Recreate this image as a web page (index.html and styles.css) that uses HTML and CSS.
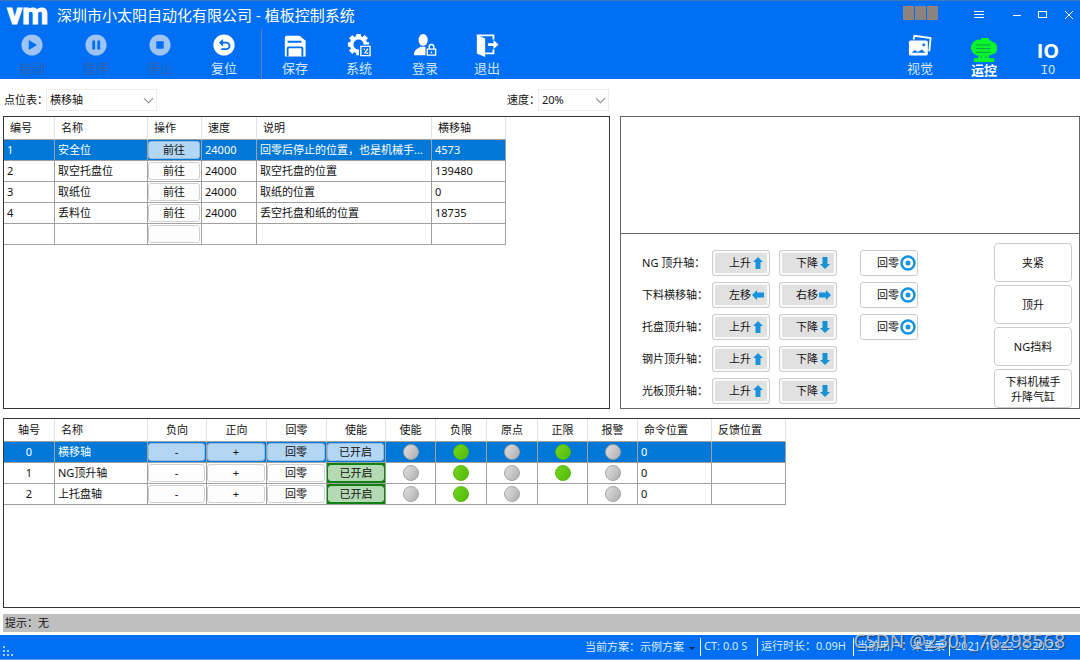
FILE: index.html
```html
<!DOCTYPE html>
<html lang="zh-CN">
<head>
    <meta charset="UTF-8">
    <meta name="viewport" content="width=device-width, initial-scale=1.0">
    <title>植板控制系统</title>
    <link rel="stylesheet" href="styles.css">
</head>
<body>
    <header class="header">
        <div class="title-bar">
            <span class="logo">vm</span>
            <h1>深圳市小太阳自动化有限公司 - 植板控制系统</h1>
            <div class="blocks"><i></i><i></i><i></i></div>
            <div class="window-buttons">
                <button class="menu" aria-label="菜单"><svg width="12" height="12" viewBox="0 0 12 12"><path d="M1 2.5h10M1 5.5h10M1 8.5h10"/></svg></button>
                <button aria-label="最小化"><svg width="12" height="12" viewBox="0 0 12 12"><path d="M2 6.5h8"/></svg></button>
                <button aria-label="最大化"><svg width="12" height="12" viewBox="0 0 12 12"><rect x="1.5" y="2.5" width="8" height="6"/></svg></button>
                <button aria-label="关闭"><svg width="12" height="12" viewBox="0 0 12 12"><path d="M2 2l8 8M10 2l-8 8"/></svg></button>
            </div>
        </div>
        <nav class="toolbar">
            <button class="tool" disabled>
                <svg viewBox="0 0 26 26"><circle cx="13" cy="13" r="11.5"/><path class="cut" d="M9.5 7.5l9 5.5-9 5.5z"/></svg>
                <span>启动</span>
            </button>
            <button class="tool" disabled>
                <svg viewBox="0 0 26 26"><circle cx="13" cy="13" r="11.5"/><path class="cut" d="M9 8h3v10H9zM14.5 8h3v10h-3z"/></svg>
                <span>暂停</span>
            </button>
            <button class="tool" disabled>
                <svg viewBox="0 0 26 26"><circle cx="13" cy="13" r="11.5"/><path class="cut" d="M9 9h8v8H9z"/></svg>
                <span>停止</span>
            </button>
            <button class="tool">
                <svg viewBox="0 0 26 26"><circle cx="13" cy="13" r="11.5"/><path class="cut-line" d="M9.5 10.5h6a3.5 3.5 0 0 1 0 7H10"/><path class="cut" d="M7.5 10.5l4.5-4v8z"/></svg>
                <span>复位</span>
            </button>
            <div class="separator"></div>
            <button class="tool">
                <svg viewBox="0 0 26 26"><path d="M2 5a2 2 0 0 1 2-2h14l6.5 5.5v17H2z"/><path class="cut-line" d="M5 9.5h15M5 25.5v-9a1 1 0 0 1 1-1h14a1 1 0 0 1 1 1v9"/></svg>
                <span>保存</span>
            </button>
            <button class="tool">
                <svg viewBox="0 0 26 26"><circle class="line gear" cx="12.5" cy="12.5" r="7.5"/><path class="line teeth" d="M12.5 5V1M12.5 20v4M5 12.5H1M20 12.5h4M7 7L4 4M18 7l3-3M7 18l-3 3"/><path class="cut" d="M13 12.5h13V26H13z"/><path class="line thin" d="M15 14.5h10v10H15zM18 17.5h1.5M22.5 17L19 22M21 22h2"/></svg>
                <span>系统</span>
            </button>
            <button class="tool login">
                <svg viewBox="0 0 26 26"><ellipse cx="11" cy="7.5" rx="5" ry="6.5"/><path d="M1 24c0-5 3-7 7.5-9H15v9z"/><path class="cut" d="M13.5 13H26v13H13.5z"/><path class="line thin" d="M15.5 17.5h9V24h-9zM17.5 17.5V15a2.5 2.5 0 0 1 5 0v2.5M20 20v2"/></svg>
                <span>登录</span>
            </button>
            <button class="tool exit">
                <svg viewBox="0 0 26 26"><path d="M2 2l9 4v20l-7-3a2 2 0 0 1-2-2z"/><path class="line" d="M2 2.5h18V7M20 18v4h-9"/><path d="M14 11h6V7.5l5.5 5-5.5 5V14h-6z"/></svg>
                <span>退出</span>
            </button>
            <div class="spacer"></div>
            <button class="tool">
                <svg viewBox="0 0 26 26"><path class="line" d="M6 7l1-4 17.5 2.5L23 20"/><rect x="1" y="8" width="20.5" height="16.5" rx="2"/><path class="cut" d="M4 21.5l3.5-3 3 2 4.5-2.500 4 3.5z"/><circle class="cut" cx="17" cy="13" r="1.5"/></svg>
                <span>视觉</span>
            </button>
            <button class="tool active">
                <svg viewBox="0 0 28 28"><path d="M11 3V1h8v2h1l4 3h2l2 4v4l-2 4h-2l-4 2h-1v3h6v4H3v-4h5v-3H6l-4-3-2-4v-3l2-4 4-3z"/><path class="cut-line" d="M5 8.5h16M5 12.5h16M5 16.5h16M11 20v3M16 20v3"/></svg>
                <span>运控</span>
            </button>
            <button class="tool">
                <b class="io">IO</b>
                <span class="mono">IO</span>
            </button>
        </nav>
    </header>

    <main class="content">
        <div class="filters">
            <label for="pointTable">点位表：</label>
            <div class="select-box wide">
                <select id="pointTable"><option>横移轴</option></select>
            </div>
            <label class="speed-label" for="speed">速度：</label>
            <div class="select-box">
                <select id="speed"><option>20%</option></select>
            </div>
        </div>

        <div class="upper">
            <section class="panel">
                <table class="points">
                    <colgroup><col class="w51"><col class="w93"><col class="w54"><col class="w55"><col class="w175"><col class="w74"></colgroup>
                    <thead>
                        <tr><th>编号</th><th>名称</th><th>操作</th><th>速度</th><th>说明</th><th>横移轴</th></tr>
                    </thead>
                    <tbody>
                        <tr class="selected"><td>1</td><td>安全位</td><td class="action"><button>前往</button></td><td>24000</td><td>回零后停止的位置，也是机械手...</td><td>4573</td></tr>
                        <tr><td>2</td><td>取空托盘位</td><td class="action"><button>前往</button></td><td>24000</td><td>取空托盘的位置</td><td>139480</td></tr>
                        <tr><td>3</td><td>取纸位</td><td class="action"><button>前往</button></td><td>24000</td><td>取纸的位置</td><td>0</td></tr>
                        <tr><td>4</td><td>丢料位</td><td class="action"><button>前往</button></td><td>24000</td><td>丢空托盘和纸的位置</td><td>18735</td></tr>
                        <tr><td></td><td></td><td class="action"><button aria-label="前往"></button></td><td></td><td></td><td></td></tr>
                    </tbody>
                </table>
            </section>

            <section class="panel side">
                <div class="preview"></div>
                <div class="controls">
                    <div class="axes">
                        <div class="axis">
                            <span>NG 顶升轴：</span>
                            <button class="jog">上升<svg viewBox="0 0 12 12"><path d="M6 0l5 5H8.5v7h-5V5H1z"/></svg></button>
                            <button class="jog">下降<svg viewBox="0 0 12 12"><path d="M6 12l5-5H8.5V0h-5v7H1z"/></svg></button>
                            <button class="home">回零<svg viewBox="0 0 16 16"><circle class="ring" cx="8" cy="8" r="6.5"/><circle cx="8" cy="8" r="2.5"/></svg></button>
                        </div>
                        <div class="axis">
                            <span>下料横移轴：</span>
                            <button class="jog">左移<svg viewBox="0 0 12 12"><path d="M0 6l5-5v2.5h7v5H5V11z"/></svg></button>
                            <button class="jog">右移<svg viewBox="0 0 12 12"><path d="M12 6L7 1v2.5H0v5h7V11z"/></svg></button>
                            <button class="home">回零<svg viewBox="0 0 16 16"><circle class="ring" cx="8" cy="8" r="6.5"/><circle cx="8" cy="8" r="2.5"/></svg></button>
                        </div>
                        <div class="axis">
                            <span>托盘顶升轴：</span>
                            <button class="jog">上升<svg viewBox="0 0 12 12"><path d="M6 0l5 5H8.5v7h-5V5H1z"/></svg></button>
                            <button class="jog">下降<svg viewBox="0 0 12 12"><path d="M6 12l5-5H8.5V0h-5v7H1z"/></svg></button>
                            <button class="home">回零<svg viewBox="0 0 16 16"><circle class="ring" cx="8" cy="8" r="6.5"/><circle cx="8" cy="8" r="2.5"/></svg></button>
                        </div>
                        <div class="axis">
                            <span>钢片顶升轴：</span>
                            <button class="jog">上升<svg viewBox="0 0 12 12"><path d="M6 0l5 5H8.5v7h-5V5H1z"/></svg></button>
                            <button class="jog">下降<svg viewBox="0 0 12 12"><path d="M6 12l5-5H8.5V0h-5v7H1z"/></svg></button>
                        </div>
                        <div class="axis">
                            <span>光板顶升轴：</span>
                            <button class="jog">上升<svg viewBox="0 0 12 12"><path d="M6 0l5 5H8.5v7h-5V5H1z"/></svg></button>
                            <button class="jog">下降<svg viewBox="0 0 12 12"><path d="M6 12l5-5H8.5V0h-5v7H1z"/></svg></button>
                        </div>
                    </div>
                    <div class="cylinders">
                        <button>夹紧</button>
                        <button>顶升</button>
                        <button>NG挡料</button>
                        <button>下料机械手<br>升降气缸</button>
                    </div>
                </div>
            </section>
        </div>

        <section class="panel lower">
            <table class="status">
                <colgroup><col class="w51"><col class="w93"><col class="w59"><col class="w60"><col class="w60"><col class="w59"><col class="w50"><col class="w51"><col class="w51"><col class="w50"><col class="w50"><col class="w74"><col class="w74"></colgroup>
                <thead>
                    <tr><th>轴号</th><th class="left">名称</th><th>负向</th><th>正向</th><th>回零</th><th>使能</th><th>使能</th><th>负限</th><th>原点</th><th>正限</th><th>报警</th><th class="left">命令位置</th><th class="left">反馈位置</th></tr>
                </thead>
                <tbody>
                    <tr class="selected">
                        <td>0</td><td class="left">横移轴</td>
                        <td class="action"><button>-</button></td><td class="action"><button>+</button></td><td class="action"><button>回零</button></td><td class="action"><button>已开启</button></td>
                        <td><i class="lamp"></i></td><td><i class="lamp on"></i></td><td><i class="lamp"></i></td><td><i class="lamp on"></i></td><td><i class="lamp"></i></td>
                        <td class="left">0</td><td></td>
                    </tr>
                    <tr>
                        <td>1</td><td class="left">NG顶升轴</td>
                        <td class="action"><button>-</button></td><td class="action"><button>+</button></td><td class="action"><button>回零</button></td><td class="action enabled"><button>已开启</button></td>
                        <td><i class="lamp"></i></td><td><i class="lamp on"></i></td><td><i class="lamp"></i></td><td><i class="lamp on"></i></td><td><i class="lamp"></i></td>
                        <td class="left">0</td><td></td>
                    </tr>
                    <tr>
                        <td>2</td><td class="left">上托盘轴</td>
                        <td class="action"><button>-</button></td><td class="action"><button>+</button></td><td class="action"><button>回零</button></td><td class="action enabled"><button>已开启</button></td>
                        <td><i class="lamp"></i></td><td><i class="lamp on"></i></td><td><i class="lamp"></i></td><td></td><td><i class="lamp"></i></td>
                        <td class="left">0</td><td></td>
                    </tr>
                </tbody>
            </table>
        </section>

        <div class="message">提示：无</div>
    </main>

    <footer class="footer">
        <svg class="grip" width="10" height="10" viewBox="0 0 10 10"><path d="M0 0h2v2H0zM0 4h2v2H0zM4 4h2v2H4zM0 8h2v2H0zM4 8h2v2H4zM8 8h2v2H8z"/></svg>
        <label for="scheme">当前方案：</label>
        <div class="scheme-box">
            <select id="scheme"><option>示例方案</option></select>
        </div>
        <span class="ct">CT: 0.0 S</span>
        <span class="runtime">运行时长：0.09H</span>
        <span class="user">当前用户：未登录</span>
        <span class="clock">2021/10/22 15:20:23</span>
        <div class="watermark">CSDN @2301_76298568</div>
    </footer>
</body>
</html>
```
FILE: styles.css
```css
* {
    box-sizing: border-box;
}

body {
    margin: 0;
    min-height: 100vh;
    display: flex;
    flex-direction: column;
    background: #fff;
    color: #111;
    font-family: "Noto Sans", "Noto Sans CJK SC", sans-serif;
    font-size: 11px;
    line-height: 16px;
}

button, select {
    font: inherit;
    color: inherit;
    margin: 0;
    padding: 0;
    border: none;
    background: none;
}

/* Header */
.header {
    height: 79px;
    background: #006ff3;
    border-top: 1px solid #3c76bb;
    color: #fff;
}

.title-bar {
    display: flex;
    align-items: center;
    height: 28px;
    padding-left: 7px;
}

.logo {
    width: 50px;
    height: 28px;
    font-family: Roboto, sans-serif;
    font-size: 30px;
    font-weight: 700;
    line-height: 25px;
    -webkit-text-stroke: 1px #fff;
}

h1 {
    margin: 0;
    font-size: 15px;
    font-weight: 400;
    line-height: 24px;
}

.blocks {
    display: flex;
    gap: 1px;
    margin-left: auto;
    margin-bottom: 4px;
}

.blocks i {
    width: 11px;
    height: 14px;
    background: #8c8280;
}

.window-buttons {
    display: flex;
    gap: 14px;
    margin-left: 35px;
    padding-right: 5px;
}

.window-buttons button {
    display: flex;
}

.window-buttons .menu {
    margin-right: 12px;
}

.window-buttons svg {
    fill: none;
    stroke: #fff;
}

.toolbar {
    display: flex;
    height: 50px;
}

.tool {
    display: flex;
    flex-direction: column;
    align-items: center;
    width: 64px;
    padding-top: 4px;
    font-size: 13px;
    color: #d5e7ff;
}

.tool svg {
    width: 26px;
    height: 26px;
    fill: #fff;
}

.tool span {
    line-height: 22px;
}

.tool .cut {
    fill: #006ff3;
}

.tool .cut-line {
    fill: none;
    stroke: #006ff3;
    stroke-width: 2;
}

.tool .line {
    fill: none;
    stroke: #fff;
    stroke-width: 2;
}

.tool .thin {
    stroke-width: 1.5;
}

.tool .gear {
    stroke-width: 4;
}

.tool .teeth {
    stroke-width: 5;
}

.tool:disabled svg {
    fill: #9cc3f3;
}

.tool:disabled span {
    color: #2c62b2;
}

.tool.login {
    width: 68px;
}

.tool.exit {
    width: 56px;
}

.tool.active {
    color: #fff;
    font-weight: 700;
    padding-top: 8px;
}

.tool.active svg {
    width: 28px;
    fill: #0cf52c;
}

.tool.active .cut-line {
    stroke: #089a50;
    stroke-width: 1;
}

.tool.active span {
    line-height: 14px;
}

.tool .io {
    height: 26px;
    font-family: "Open Sans", sans-serif;
    font-size: 20px;
    line-height: 36px;
    color: #fff;
}

.tool .mono {
    font-family: "Liberation Mono", monospace;
    font-size: 12px;
    line-height: 24px;
}

.separator {
    width: 1px;
    margin: 0 1px 0 5px;
    background: #5d7da8;
}

.spacer {
    flex: 1;
}

/* Content */
.content {
    flex: 1;
    display: flex;
    flex-direction: column;
    padding-left: 3px;
}

.filters {
    display: flex;
    align-items: center;
    height: 37px;
    padding: 5px 0 1px 1px;
}

.select-box {
    position: relative;
    width: 71px;
    height: 22px;
    border: 1px solid #ececec;
}

.select-box.wide {
    width: 111px;
}

.filters label {
    width: 42px;
    white-space: nowrap;
}

.filters .speed-label {
    width: 31px;
    margin-left: 350px;
}

.select-box select {
    width: 100%;
    height: 20px;
    padding-left: 3px;
    appearance: none;
}

.select-box::after {
    content: "";
    position: absolute;
    right: 4px;
    top: 5px;
    width: 6px;
    height: 6px;
    border-right: 1px solid #888;
    border-bottom: 1px solid #888;
    transform: rotate(45deg);
    pointer-events: none;
}

.upper {
    flex: 17 1 0;
    display: grid;
    grid-template-columns: 1.32fr 1fr;
    gap: 10px;
}

.panel {
    border: 1px solid #333;
    overflow: hidden;
}

.side {
    display: flex;
    flex-direction: column;
    border-color: #666;
}

.lower {
    flex: 11 1 0;
    margin-top: 9px;
    border-right: none;
}

/* Tables */
table {
    table-layout: fixed;
    width: 0;
    border-spacing: 0;
}

.w50 { width: 50px; }
.w51 { width: 51px; }
.w54 { width: 54px; }
.w55 { width: 55px; }
.w59 { width: 59px; }
.w60 { width: 60px; }
.w74 { width: 74px; }
.w93 { width: 93px; }
.w175 { width: 175px; }

th {
    height: 23px;
    padding: 0 6px;
    font-weight: 400;
    text-align: left;
    border-right: 1px solid #e3e3e3;
    border-bottom: 1px solid #a0a0a0;
}

td {
    height: 21px;
    padding: 0 3px;
    border-right: 1px solid #a0a0a0;
    border-bottom: 1px solid #a0a0a0;
    white-space: nowrap;
}

.status th, .status td {
    text-align: center;
}

.status .left {
    text-align: left;
}

.selected td {
    background: #0078d7;
    color: #fff;
}

td.action {
    padding: 0 1px 0 0;
}

.action button {
    display: block;
    width: 100%;
    height: 18px;
    line-height: 16px;
    border: 1px solid #d0d0d0;
    border-radius: 3px;
    background: #fdfdfd;
    color: #111;
}

.selected .action button {
    background: #b3d6f3;
    border-color: #8cbbe3;
}

td.enabled {
    padding: 0 1px;
    background: #138013;
}

.enabled button {
    height: 16px;
    line-height: 14px;
    background: #b3dab3;
    border-color: #b3dab3;
}

.lamp {
    display: block;
    width: 16px;
    height: 16px;
    margin: 0 auto;
    border: 1px solid #a3a3a3;
    border-radius: 50%;
    background: linear-gradient(120deg, #dedede, #c8c8c8 50%, #acacac);
}

.lamp.on {
    border-color: #58b512;
    background: linear-gradient(120deg, #75d61d, #50b90b);
}

/* Axis controls */
.preview {
    height: 117px;
    flex: none;
    border-bottom: 1px solid #666;
}

.controls {
    flex: 1;
    min-height: 0;
    display: flex;
    justify-content: space-between;
    padding: 9px 7px 0 21px;
}

.axes {
    display: flex;
    flex-direction: column;
    gap: 6px;
    padding-top: 7px;
}

.axis {
    display: flex;
    align-items: center;
    gap: 9px;
}

.axis span {
    width: 61px;
    white-space: nowrap;
}

.axis button {
    display: flex;
    align-items: center;
    justify-content: flex-end;
    width: 58px;
    height: 26px;
    border: 1px solid #ccc;
    border-radius: 3px;
}

.axis .jog {
    padding-right: 5px;
    background: #e1e1e1;
    box-shadow: inset 0 0 0 2px #fafafa;
}

.axis .home {
    margin-left: 14px;
    padding-right: 1px;
}

.axis svg {
    width: 12px;
    height: 12px;
    margin-left: 1px;
    fill: #1793dc;
}

.axis .home svg {
    width: 16px;
    height: 16px;
}

.axis .ring {
    fill: none;
    stroke: #1793dc;
    stroke-width: 2.5;
}

.cylinders {
    display: flex;
    flex-direction: column;
    gap: 3px;
}

.cylinders button {
    flex: none;
    width: 78px;
    height: 39px;
    border: 1px solid #ccc;
    border-radius: 4px;
    line-height: 15px;
}

.message {
    height: 18px;
    margin: 6px 0 3px;
    padding: 1px 2px;
    background: #bfbfbf;
}

/* Status bar */
.footer {
    position: relative;
    display: flex;
    align-items: center;
    justify-content: flex-end;
    height: 25px;
    padding-right: 16px;
    background: #006ff3;
    border-bottom: 1px solid #6b95c4;
    color: #dcecff;
    white-space: nowrap;
}

.footer .grip {
    margin: 8px auto 0 3px;
    fill: #a5cdf7;
}

.footer span {
    height: 18px;
    padding-left: 3px;
    border-left: 1px solid #fff;
}

.scheme-box {
    position: relative;
    width: 60px;
}

.scheme-box select {
    width: 100%;
    appearance: none;
}

.scheme-box::after {
    content: "";
    position: absolute;
    right: 5px;
    top: 8px;
    border: 3px solid transparent;
    border-top-color: #03264f;
    border-bottom: none;
    pointer-events: none;
}

.ct {
    width: 57px;
}

.runtime, .user {
    width: 96px;
}

.footer .clock {
    width: 115px;
    padding-left: 5px;
}

.watermark {
    position: absolute;
    right: 15px;
    bottom: 6px;
    font-size: 19px;
    line-height: 24px;
    color: rgba(205, 215, 230, 0.8);
    text-shadow: 1px 1px 1px rgba(50, 50, 50, 0.7);
    pointer-events: none;
}
```
